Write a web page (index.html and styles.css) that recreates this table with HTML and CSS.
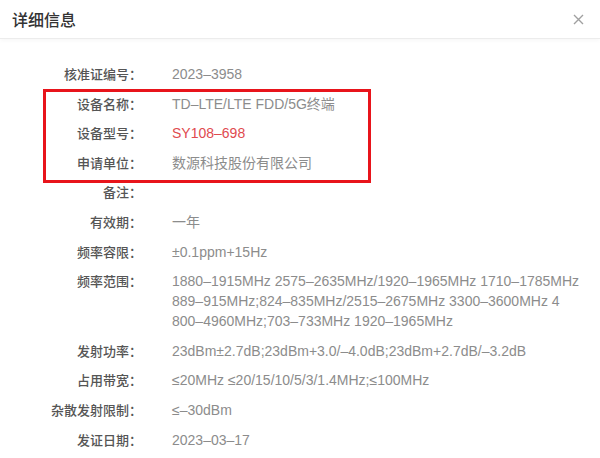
FILE: index.html
```html
<!DOCTYPE html>
<html lang="zh-CN">
<head>
    <meta charset="UTF-8">
    <meta name="viewport" content="width=device-width, initial-scale=1.0">
    <title>详细信息</title>
    <link rel="stylesheet" href="styles.css">
</head>
<body>
    <div class="dialog">
        <div class="dialog-header">
            <h2 class="title">详细信息</h2>
            <button class="close" aria-label="关闭">
                <svg width="11" height="11" viewBox="0 0 11 11">
                    <path d="M1 1L10 10M10 1L1 10" stroke="#a0a0a0" stroke-width="1.4" fill="none"/>
                </svg>
            </button>
        </div>

        <div class="detail-list">
            <div class="row">
                <span class="label">核准证编号：</span>
                <span class="value">2023–3958</span>
            </div>

            <!-- 红框标注 -->
            <div class="highlight">
                <div class="row">
                    <span class="label">设备名称：</span>
                    <span class="value">TD–LTE/LTE FDD/5G终端</span>
                </div>
                <div class="row">
                    <span class="label">设备型号：</span>
                    <span class="value red">SY108–698</span>
                </div>
                <div class="row">
                    <span class="label">申请单位：</span>
                    <span class="value">数源科技股份有限公司</span>
                </div>
            </div>

            <div class="row">
                <span class="label">备注：</span>
                <span class="value"></span>
            </div>
            <div class="row">
                <span class="label">有效期：</span>
                <span class="value">一年</span>
            </div>
            <div class="row">
                <span class="label">频率容限：</span>
                <span class="value">±0.1ppm+15Hz</span>
            </div>
            <div class="row">
                <span class="label">频率范围：</span>
                <span class="value">1880–1915MHz 2575–2635MHz/1920–1965MHz 1710–1785MHz<br>889–915MHz;824–835MHz/2515–2675MHz 3300–3600MHz 4<br>800–4960MHz;703–733MHz 1920–1965MHz</span>
            </div>
            <div class="row">
                <span class="label">发射功率：</span>
                <span class="value">23dBm±2.7dB;23dBm+3.0/–4.0dB;23dBm+2.7dB/–3.2dB</span>
            </div>
            <div class="row">
                <span class="label">占用带宽：</span>
                <span class="value">≤20MHz ≤20/15/10/5/3/1.4MHz;≤100MHz</span>
            </div>
            <div class="row">
                <span class="label">杂散发射限制：</span>
                <span class="value">≤–30dBm</span>
            </div>
            <div class="row">
                <span class="label">发证日期：</span>
                <span class="value">2023–03–17</span>
            </div>
        </div>
    </div>
</body>
</html>
```

FILE: styles.css
```css
body {
    margin: 0;
    padding: 0;
    background-color: #fff;
    font-family: "Liberation Sans", "Noto Sans CJK SC", sans-serif;
}

.dialog {
    width: 600px;
    height: 458px;
    overflow: hidden;
    background: #fff;
}

.dialog-header {
    display: flex;
    align-items: center;
    justify-content: space-between;
    height: 38px;
    padding: 0 16px 0 12px;
    border-bottom: 1px solid #ececec;
    box-shadow: 0 2px 4px rgba(0, 0, 0, 0.03);
}

.title {
    margin: 0;
    font-family: "Noto Sans CJK SC", sans-serif;
    font-size: 16px;
    font-weight: 500;
    color: #333;
}

.close {
    display: flex;
    padding: 0;
    border: none;
    background: none;
    cursor: pointer;
}

.detail-list {
    display: flex;
    flex-direction: column;
    gap: 9.6px;
    padding-top: 25px;
}

.highlight {
    position: relative;
    display: flex;
    flex-direction: column;
    gap: 9.6px;
}

.highlight::after {
    content: "";
    position: absolute;
    left: 43px;
    width: 322px;
    top: -5px;
    bottom: -10px;
    border: 3px solid #e8141b;
}

.row {
    display: flex;
    line-height: 20px;
}

.label {
    flex-shrink: 0;
    width: 142px;
    text-align: right;
    font-family: "Noto Sans CJK SC", sans-serif;
    font-size: 13px;
    font-weight: 500;
    color: #555;
}

.value {
    margin-left: 30px;
    font-size: 14px;
    color: #8c8c8c;
}

.value.red {
    color: #e04a4f;
}
```
